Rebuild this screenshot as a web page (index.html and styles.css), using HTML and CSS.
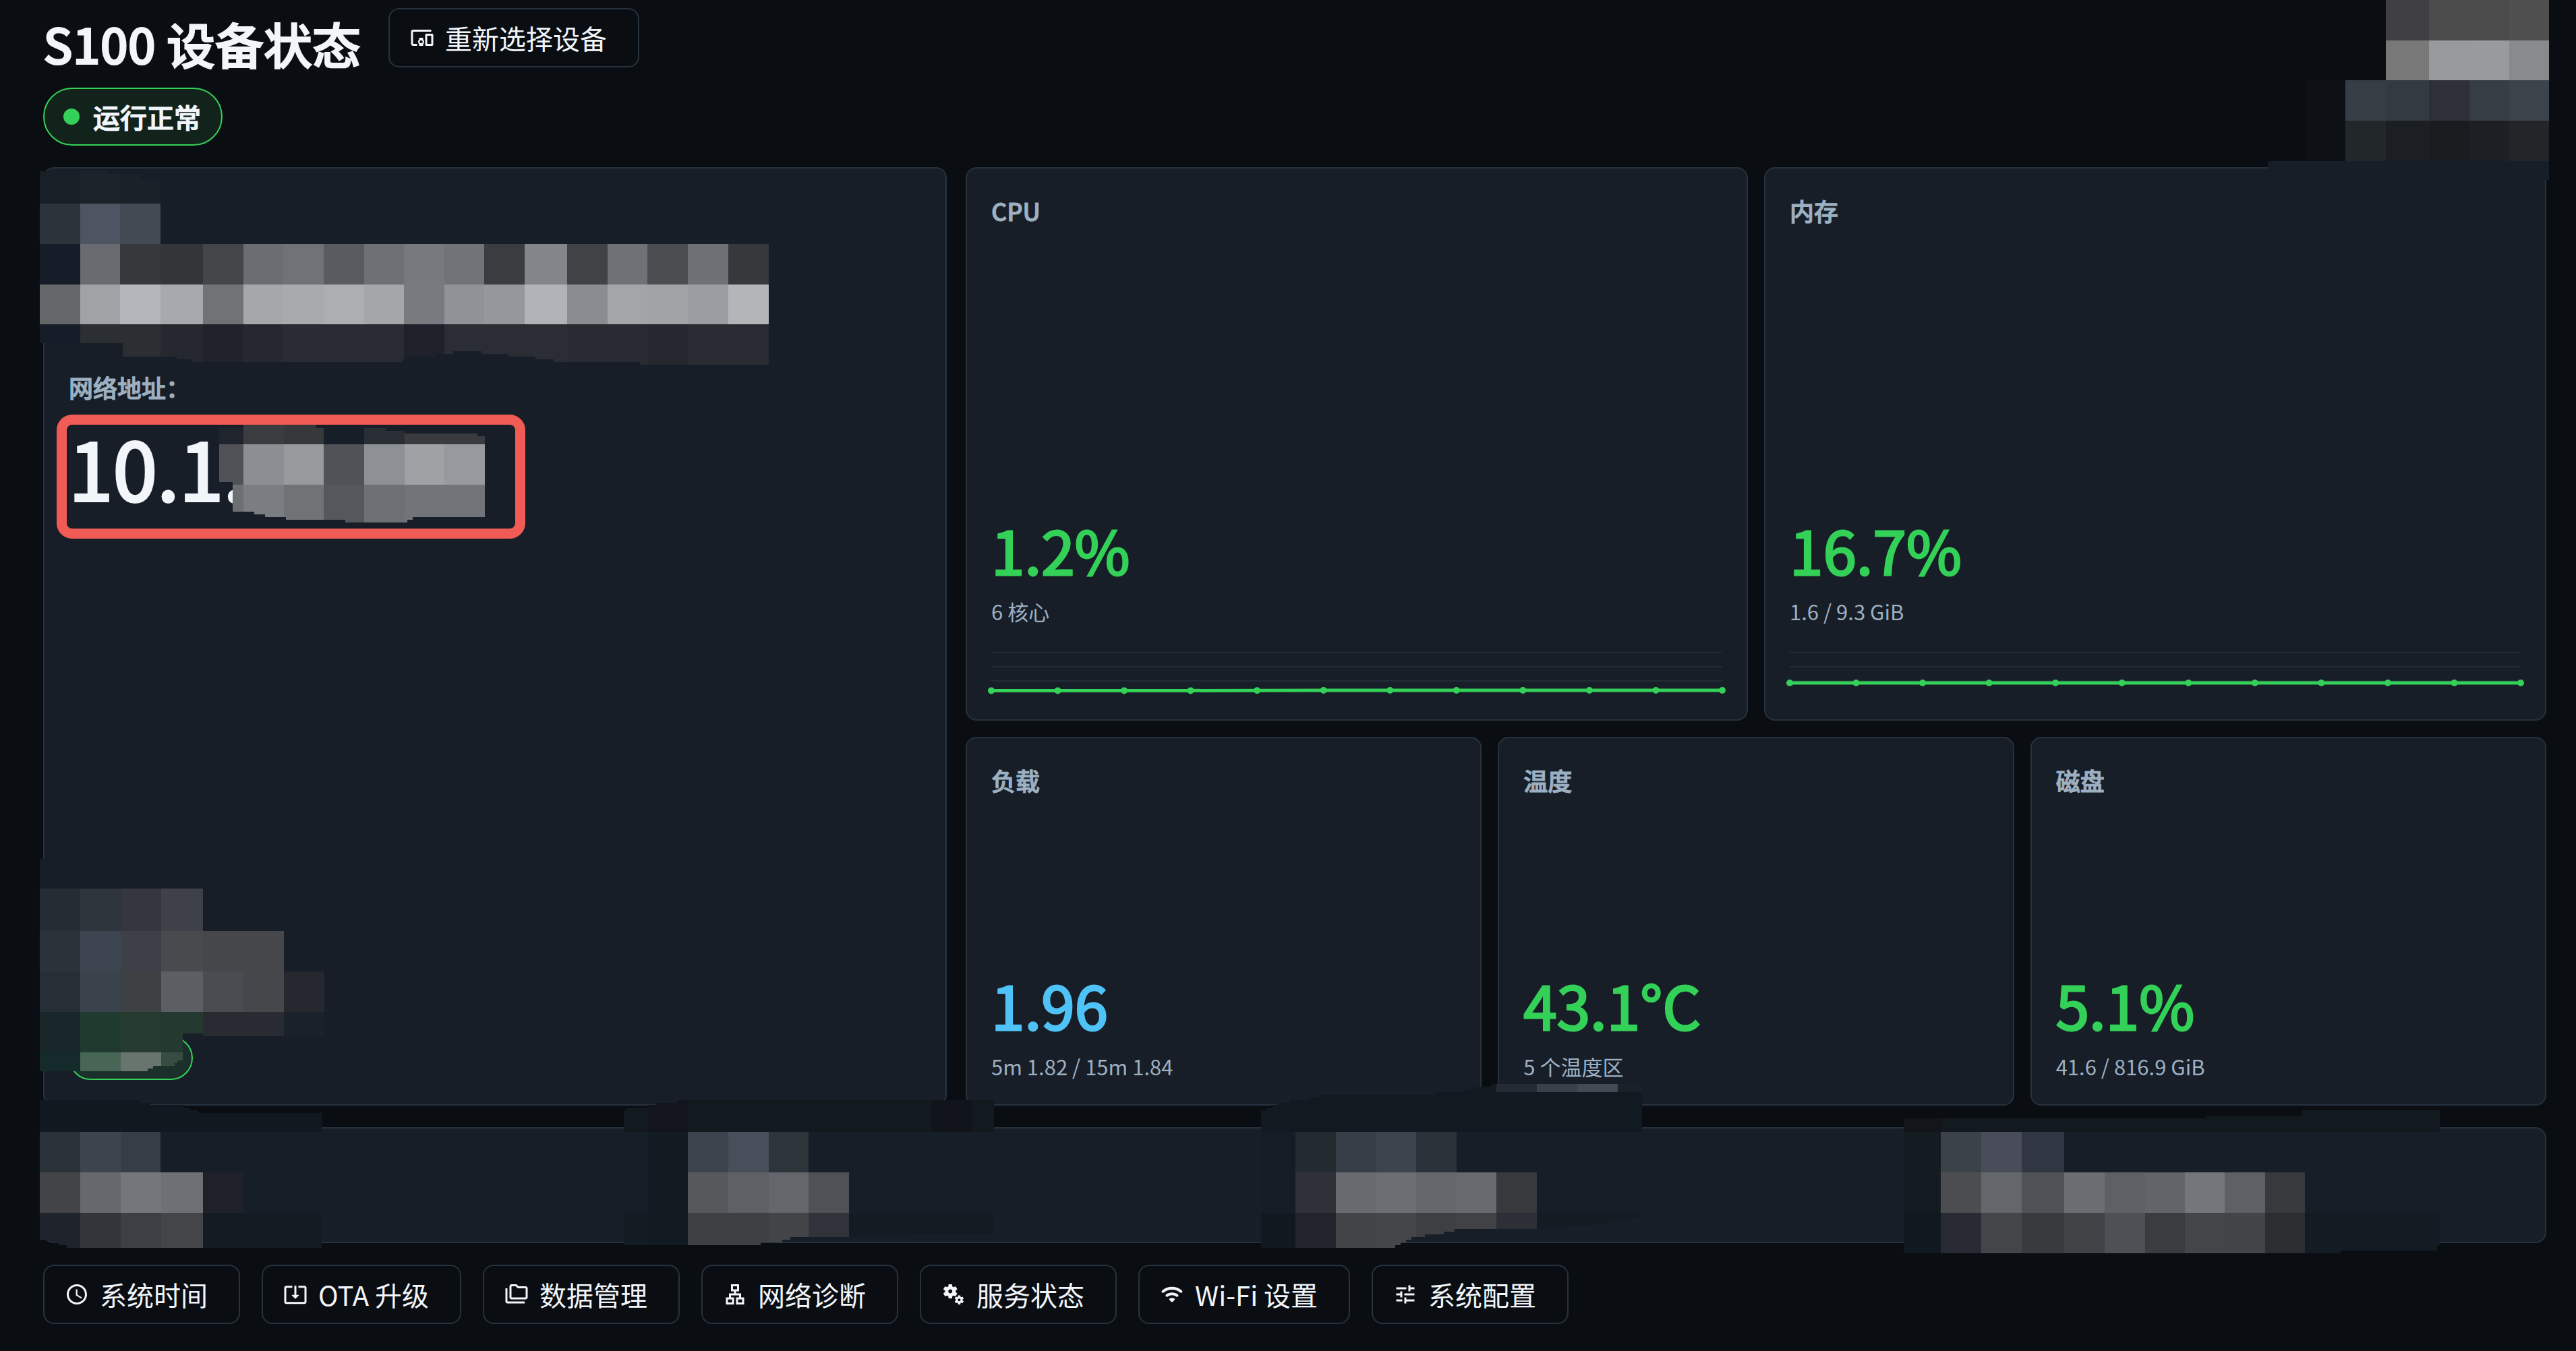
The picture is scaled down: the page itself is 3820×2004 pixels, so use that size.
FILE: index.html
```html
<!DOCTYPE html>
<html lang="zh-CN">
<head>
<meta charset="utf-8">
<title>S100 设备状态</title>
<link rel="stylesheet" href="styles.css">
</head>
<body>
<div class="page">
  <header class="header">
    <div class="title-row">
      <h1 class="title">S100 设备状态</h1>
      <button class="btn">
        <svg class="icon" viewBox="0 0 24 24"><path d="M3 6h18V4H3c-1.1 0-2 .9-2 2v12c0 1.1.9 2 2 2h4v-2H3V6zm10 6H9v1.78c-.61.55-1 1.33-1 2.22s.39 1.67 1 2.22V20h4v-1.78c.61-.55 1-1.34 1-2.22s-.39-1.67-1-2.22V12zm-2 5.5c-.83 0-1.5-.67-1.5-1.5s.67-1.5 1.5-1.5 1.5.67 1.5 1.5-.67 1.5-1.5 1.5zM22 8h-6c-.5 0-1 .5-1 1v10c0 .5.5 1 1 1h6c.5 0 1-.5 1-1V9c0-.5-.5-1-1-1zm-1 10h-4v-8h4v8z"/></svg>
        <span>重新选择设备</span>
      </button>
    </div>
    <div class="status"><i class="status-dot"></i><span>运行正常</span></div>
  </header>

  <main class="board">
    <section class="card identity">
      <div class="address">
        <div class="label">网络地址：</div>
        <div class="ip">10.1.</div>
      </div>
      <div class="tag"></div>
    </section>

    <div class="metrics">
      <section class="card metric wide">
        <div class="label">CPU</div>
        <div class="metric-body">
          <div class="value ok">1.2%</div>
          <div class="sub">6 核心</div>
          <svg class="chart" viewBox="0 0 1084 84">
            <path class="gridline" d="M0 21H1084M0 42H1084M0 63H1084"/>
            <path class="trend" d="M0 77.4H296L493 77H1084"/>
            <path class="dots" d="M0 77.4h0M98.5 77.4h0M197.1 77.4h0M295.6 77.4h0M394.2 77.2h0M492.7 77h0M591.3 77h0M689.8 77h0M788.4 77h0M886.9 77h0M985.5 77h0M1084 77h0"/>
          </svg>
        </div>
      </section>
      <section class="card metric wide">
        <div class="label">内存</div>
        <div class="metric-body">
          <div class="value ok">16.7%</div>
          <div class="sub">1.6 / 9.3 GiB</div>
          <svg class="chart" viewBox="0 0 1084 84">
            <path class="gridline" d="M0 21H1084M0 42H1084M0 63H1084"/>
            <path class="trend" d="M0 66H1084"/>
            <path class="dots" d="M0 66h0M98.5 66h0M197.1 66h0M295.6 66h0M394.2 66h0M492.7 66h0M591.3 66h0M689.8 66h0M788.4 66h0M886.9 66h0M985.5 66h0M1084 66h0"/>
          </svg>
        </div>
      </section>
      <section class="card metric">
        <div class="label">负载</div>
        <div class="metric-body">
          <div class="value info">1.96</div>
          <div class="sub">5m 1.82 / 15m 1.84</div>
        </div>
      </section>
      <section class="card metric">
        <div class="label">温度</div>
        <div class="metric-body">
          <div class="value ok">43.1°C</div>
          <div class="sub">5 个温度区</div>
        </div>
      </section>
      <section class="card metric">
        <div class="label">磁盘</div>
        <div class="metric-body">
          <div class="value ok">5.1%</div>
          <div class="sub">41.6 / 816.9 GiB</div>
        </div>
      </section>
    </div>
  </main>

  <section class="card strip"></section>

  <footer class="actions">
    <button class="btn"><svg class="icon" viewBox="0 0 24 24"><path d="M11.99 2C6.47 2 2 6.48 2 12s4.47 10 9.99 10C17.52 22 22 17.52 22 12S17.52 2 11.99 2zM12 20c-4.42 0-8-3.58-8-8s3.58-8 8-8 8 3.58 8 8-3.58 8-8 8zm.5-13H11v6l5.25 3.15.75-1.23-4.5-2.67z"/></svg><span>系统时间</span></button>
    <button class="btn"><svg class="icon" viewBox="0 0 24 24"><path d="M12 16.5l4-4h-3v-9h-2v9H8l4 4zm9-13h-6v1.99h6v14.03H3V5.49h6V3.5H3c-1.1 0-2 .9-2 2v14c0 1.1.9 2 2 2h18c1.1 0 2-.9 2-2v-14c0-1.1-.9-2-2-2z"/></svg><span>OTA 升级</span></button>
    <button class="btn"><svg class="icon" viewBox="0 0 24 24"><path d="M3 19h17v2H3c-1.1 0-2-.9-2-2V6h2v13zM23 6v9c0 1.1-.9 2-2 2H7c-1.1 0-2-.9-2-2l.01-11c0-1.1.89-2 1.99-2h5l2 2h7c1.1 0 2 .9 2 2zM7 15h14V6h-7.83l-2-2H7v11z"/></svg><span>数据管理</span></button>
    <button class="btn"><svg class="icon" viewBox="0 0 24 24"><path d="M13 22h8v-7h-3v-4h-5V9h3V2H8v7h3v2H6v4H3v7h8v-7H8v-2h8v2h-3v7zM10 7V4h4v3h-4zM9 17v3H5v-3h4zm10 0v3h-4v-3h4z"/></svg><span>网络诊断</span></button>
    <button class="btn"><svg class="icon" viewBox="0 0 24 24"><path d="M14.17 13.71l1.4-2.42c.09-.15.05-.34-.08-.45l-1.48-1.16c.03-.22.05-.45.05-.68s-.02-.46-.05-.69l1.48-1.16c.13-.11.17-.3.08-.45l-1.4-2.42c-.09-.15-.27-.21-.43-.15L12 4.83c-.36-.28-.75-.51-1.18-.69l-.26-1.85C10.53 2.13 10.38 2 10.21 2h-2.8c-.17 0-.32.13-.35.3L6.8 4.15c-.42.18-.82.41-1.18.69l-1.74-.7c-.16-.06-.34 0-.43.15l-1.4 2.42c-.09.15-.05.34.08.45l1.48 1.16c-.03.22-.05.45-.05.68s.02.46.05.69l-1.48 1.16c-.13.11-.17.3-.08.45l1.4 2.42c.09.15.27.21.43.15l1.74-.7c.36.28.75.51 1.18.69l.26 1.85c.03.16.18.29.35.29h2.8c.17 0 .32-.13.35-.3l.26-1.85c.42-.18.82-.41 1.18-.69l1.74.7c.16.06.34 0 .43-.15zM8.81 11c-1.1 0-2-.9-2-2s.9-2 2-2 2 .9 2 2-.9 2-2 2zM21.92 18.67l-.96-.74c.02-.14.04-.29.04-.44s-.01-.3-.04-.44l.95-.74c.08-.07.11-.19.05-.29l-.9-1.55c-.05-.1-.17-.13-.28-.1l-1.11.45c-.23-.18-.48-.33-.76-.44l-.17-1.18c-.01-.12-.11-.2-.21-.2h-1.79c-.11 0-.21.08-.22.19l-.17 1.18c-.27.12-.53.26-.76.44l-1.11-.45c-.1-.04-.22 0-.28.1l-.9 1.55c-.05.1-.04.22.05.29l.95.74c-.02.14-.03.29-.03.44s.01.3.03.44l-.95.74c-.08.07-.11.19-.05.29l.9 1.55c.05.1.17.13.28.1l1.11-.45c.23.18.48.33.76.44l.17 1.18c.02.11.11.19.22.19h1.79c.11 0 .21-.08.22-.19l.17-1.18c.27-.12.53-.26.75-.44l1.12.45c.1.04.22 0 .28-.1l.9-1.55c.06-.09.03-.21-.05-.28zm-4.29.16c-.74 0-1.35-.6-1.35-1.35s.6-1.35 1.35-1.35 1.35.6 1.35 1.35-.61 1.35-1.35 1.35z"/></svg><span>服务状态</span></button>
    <button class="btn"><svg class="icon" viewBox="0 0 24 24"><path d="M2.1 10.1c.5.5 1.3.5 1.8.1 4.7-3.9 11.5-3.9 16.2 0 .5.4 1.3.4 1.8-.1.6-.6.5-1.5-.1-2-5.7-4.7-13.9-4.7-19.6 0-.6.5-.7 1.4-.1 2zM9.6 17.6l1.7 1.7c.4.4 1 .4 1.4 0l1.7-1.7c.5-.5.4-1.3-.2-1.6-1.4-.7-3-.7-4.4 0-.6.3-.7 1.1-.2 1.6zM6.100 14.100c.5.5 1.200.5 1.700.1 2.500-1.800 5.900-1.800 8.400 0 .5.4 1.200.3 1.700-.1.6-.6.6-1.600-.1-2.100-3.400-2.500-8.200-2.500-11.600 0-.7.5-.7 1.500-.1 2.100z"/></svg><span>Wi-Fi 设置</span></button>
    <button class="btn"><svg class="icon" viewBox="0 0 24 24"><path d="M3 17v2h6v-2H3zM3 5v2h10V5H3zm10 16v-2h8v-2h-8v-2h-2v6h2zM7 9v2H3v2h4v2h2V9H7zm14 4v-2H11v2h10zm-6-4h2V7h4V5h-4V3h-2v6z"/></svg><span>系统配置</span></button>
  </footer>
</div>

<!-- Privacy mosaic over the sensitive regions -->
<svg class="mosaic" viewBox="0 0 3820 2004" shape-rendering="crispEdges">
  <defs>
    <clipPath id="clip-name"><path d="M59 254H159V258H208V266H238V302H1140V541H949V537H821V533H794V529H754V525H714V521H672V525H648V529H603V533H597V537H285V533H262V529H182V509H59Z"/></clipPath>
    <clipPath id="clip-ip"><path d="M325 635H361V630H469V635H572V639H600V643H708V647H719V767H612V771H604V775H512V771H424V767H393V763H377V759H345V715H325Z"/></clipPath>
    <clipPath id="clip-tag"><path d="M59 1274H481V1537H301V1533H271V1573H263V1577H259V1581H227V1585H219V1589H59Z"/></clipPath>
    <clipPath id="clip-s1"><path d="M59 1632H207V1636H223V1639H271V1643H282V1647H294V1651H477V1851H99V1847H87V1843H77V1839H59Z"/></clipPath>
    <clipPath id="clip-s2"><path d="M925 1647H929V1643H960V1639H972V1636H1004V1632H1474V1831H1351V1835H1172V1839H1160V1843H1128V1847H925Z"/></clipPath>
    <clipPath id="clip-s3"><path d="M1870 1647H1878V1643H1886V1639H1894V1636H1913V1632H1941V1628H1957V1624H2128V1620H2172V1616H2187V1612H2211V1608H2435V1807H2411V1811H2386V1815H2366V1819H2326V1823H2157V1827H2141V1831H2113V1835H2093V1839H2085V1843H2077V1847H2069V1851H1870Z"/></clipPath>
    <clipPath id="clip-s4"><path d="M2823 1659H3272V1655H3414V1647H3618V1847H3614V1855H3471V1859H2823Z"/></clipPath>
  </defs>

  <g>
    <rect x="3538" y="0" width="64" height="60" fill="#404044"/><rect x="3602" y="0" width="119" height="60" fill="#4b4b4b"/><rect x="3721" y="0" width="59" height="60" fill="#4f4f50"/>
    <rect x="3538" y="60" width="64" height="59" fill="#787878"/><rect x="3602" y="60" width="60" height="59" fill="#98999c"/><rect x="3662" y="60" width="59" height="59" fill="#989b9d"/><rect x="3721" y="60" width="59" height="59" fill="#888b8c"/>
    <rect x="3418" y="119" width="60" height="120" fill="#0d1115"/>
    <rect x="3478" y="119" width="60" height="60" fill="#363d45"/><rect x="3538" y="119" width="64" height="60" fill="#333a42"/><rect x="3602" y="119" width="60" height="60" fill="#2d3039"/><rect x="3662" y="119" width="59" height="60" fill="#363d44"/><rect x="3721" y="119" width="59" height="60" fill="#3c434b"/>
    <rect x="3478" y="179" width="60" height="60" fill="#22272a"/><rect x="3538" y="179" width="64" height="60" fill="#1b1e22"/><rect x="3602" y="179" width="60" height="60" fill="#191b1f"/><rect x="3662" y="179" width="59" height="60" fill="#1c1f23"/><rect x="3721" y="179" width="59" height="60" fill="#232529"/>
    <rect x="3363" y="239" width="417" height="28" fill="#161e27"/>
  </g>

  <g clip-path="url(#clip-name)">
    <rect x="59" y="254" width="60" height="48" fill="#181f26"/><rect x="119" y="254" width="59" height="48" fill="#1b222a"/><rect x="178" y="254" width="60" height="48" fill="#192129"/>
    <rect x="59" y="302" width="60" height="60" fill="#2b343b"/><rect x="119" y="302" width="59" height="60" fill="#4e5562"/><rect x="178" y="302" width="60" height="60" fill="#424a53"/>
    <rect x="59" y="362" width="60" height="60" fill="#151e28"/><rect x="119" y="362" width="59" height="60" fill="#686b6f"/><rect x="178" y="362" width="60" height="60" fill="#36383b"/><rect x="238" y="362" width="63" height="60" fill="#333538"/><rect x="301" y="362" width="60" height="60" fill="#434548"/><rect x="361" y="362" width="59" height="60" fill="#6a6d71"/><rect x="420" y="362" width="60" height="60" fill="#6f7276"/><rect x="480" y="362" width="60" height="60" fill="#585b5f"/><rect x="540" y="362" width="59" height="60" fill="#6d7074"/><rect x="599" y="362" width="60" height="60" fill="#76797e"/><rect x="659" y="362" width="59" height="60" fill="#707377"/><rect x="718" y="362" width="60" height="60" fill="#3a3c3f"/><rect x="778" y="362" width="63" height="60" fill="#828589"/><rect x="841" y="362" width="60" height="60" fill="#404346"/><rect x="901" y="362" width="59" height="60" fill="#6e7175"/><rect x="960" y="362" width="60" height="60" fill="#4b4d51"/><rect x="1020" y="362" width="60" height="60" fill="#6d7074"/><rect x="1080" y="362" width="60" height="60" fill="#36383c"/>
    <rect x="59" y="422" width="60" height="59" fill="#646769"/><rect x="119" y="422" width="59" height="59" fill="#9fa3a5"/><rect x="178" y="422" width="60" height="59" fill="#b3b7bb"/><rect x="238" y="422" width="63" height="59" fill="#a6a9ad"/><rect x="301" y="422" width="60" height="59" fill="#707376"/><rect x="361" y="422" width="59" height="59" fill="#a4a8ab"/><rect x="420" y="422" width="60" height="59" fill="#a7abad"/><rect x="480" y="422" width="60" height="59" fill="#abafb1"/><rect x="540" y="422" width="59" height="59" fill="#a3a7a9"/><rect x="599" y="422" width="60" height="59" fill="#787a7f"/><rect x="659" y="422" width="59" height="59" fill="#8f9297"/><rect x="718" y="422" width="60" height="59" fill="#94979b"/><rect x="778" y="422" width="63" height="59" fill="#b0b3b8"/><rect x="841" y="422" width="60" height="59" fill="#898c90"/><rect x="901" y="422" width="59" height="59" fill="#a3a6a9"/><rect x="960" y="422" width="60" height="59" fill="#a0a3a6"/><rect x="1020" y="422" width="60" height="59" fill="#9b9da2"/><rect x="1080" y="422" width="60" height="59" fill="#b2b6b9"/>
    <rect x="59" y="481" width="60" height="60" fill="#151e28"/><rect x="119" y="481" width="119" height="60" fill="#2b2e33"/><rect x="238" y="481" width="63" height="60" fill="#25282f"/><rect x="301" y="481" width="60" height="60" fill="#20232b"/><rect x="361" y="481" width="59" height="60" fill="#25282f"/><rect x="420" y="481" width="179" height="60" fill="#292c33"/><rect x="599" y="481" width="60" height="60" fill="#1e2129"/><rect x="659" y="481" width="182" height="60" fill="#2a2d33"/><rect x="841" y="481" width="119" height="60" fill="#282b31"/><rect x="960" y="481" width="60" height="60" fill="#25282e"/><rect x="1020" y="481" width="120" height="60" fill="#292c32"/>
  </g>

  <g clip-path="url(#clip-ip)">
    <rect x="325" y="630" width="36" height="29" fill="#20242c"/><rect x="361" y="630" width="60" height="29" fill="#3a3c3f"/><rect x="421" y="630" width="59" height="29" fill="#36383a"/><rect x="480" y="630" width="60" height="29" fill="#161e28"/><rect x="540" y="630" width="60" height="29" fill="#292d34"/><rect x="600" y="630" width="119" height="29" fill="#393b3f"/>
    <rect x="325" y="659" width="36" height="60" fill="#505257"/><rect x="361" y="659" width="60" height="60" fill="#8b8e92"/><rect x="421" y="659" width="59" height="60" fill="#969a9c"/><rect x="480" y="659" width="60" height="60" fill="#4f5256"/><rect x="540" y="659" width="60" height="60" fill="#8d9094"/><rect x="600" y="659" width="59" height="60" fill="#9fa2a4"/><rect x="659" y="659" width="60" height="60" fill="#96999d"/>
    <rect x="325" y="719" width="36" height="60" fill="#6d7072"/><rect x="361" y="719" width="60" height="60" fill="#7a7d81"/><rect x="421" y="719" width="59" height="60" fill="#707376"/><rect x="480" y="719" width="60" height="60" fill="#54575b"/><rect x="540" y="719" width="60" height="60" fill="#6d7074"/><rect x="600" y="719" width="119" height="60" fill="#717478"/>
  </g>

  <g clip-path="url(#clip-tag)">
    <rect x="59" y="1274" width="60" height="44" fill="#171e27"/>
    <rect x="59" y="1318" width="60" height="63" fill="#262c34"/><rect x="119" y="1318" width="60" height="63" fill="#2e353c"/><rect x="179" y="1318" width="60" height="63" fill="#35373f"/><rect x="239" y="1318" width="62" height="63" fill="#3f4149"/>
    <rect x="59" y="1381" width="60" height="60" fill="#2b333a"/><rect x="119" y="1381" width="60" height="60" fill="#3d4550"/><rect x="179" y="1381" width="60" height="60" fill="#3e4048"/><rect x="239" y="1381" width="62" height="60" fill="#484a4d"/><rect x="301" y="1381" width="120" height="60" fill="#45474b"/>
    <rect x="59" y="1441" width="60" height="60" fill="#272e36"/><rect x="119" y="1441" width="60" height="60" fill="#3a424c"/><rect x="179" y="1441" width="60" height="60" fill="#3d4043"/><rect x="239" y="1441" width="62" height="60" fill="#5b5e63"/><rect x="301" y="1441" width="60" height="60" fill="#494c50"/><rect x="361" y="1441" width="60" height="60" fill="#45474b"/><rect x="421" y="1441" width="60" height="60" fill="#25292f"/>
    <rect x="59" y="1501" width="60" height="60" fill="#1a272a"/><rect x="119" y="1501" width="60" height="60" fill="#203a2f"/><rect x="179" y="1501" width="60" height="60" fill="#253b31"/><rect x="239" y="1501" width="62" height="60" fill="#24392f"/><rect x="301" y="1501" width="120" height="36" fill="#282b32"/><rect x="421" y="1501" width="60" height="36" fill="#19212a"/>
    <rect x="59" y="1561" width="60" height="28" fill="#152a2a"/><rect x="119" y="1561" width="60" height="28" fill="#486655"/><rect x="179" y="1561" width="60" height="28" fill="#68756f"/><rect x="239" y="1561" width="32" height="28" fill="#384d42"/>
  </g>

  <g clip-path="url(#clip-s1)">
    <rect x="59" y="1632" width="418" height="47" fill="#111920"/><rect x="59" y="1679" width="418" height="120" fill="#161e27"/><rect x="59" y="1799" width="418" height="52" fill="#131b23"/>
    <rect x="59" y="1679" width="60" height="60" fill="#2b333a"/><rect x="119" y="1679" width="60" height="60" fill="#3d444e"/><rect x="179" y="1679" width="59" height="60" fill="#363d47"/>
    <rect x="59" y="1739" width="60" height="60" fill="#424447"/><rect x="119" y="1739" width="60" height="60" fill="#65686d"/><rect x="179" y="1739" width="60" height="60" fill="#73777b"/><rect x="239" y="1739" width="62" height="60" fill="#6d7075"/><rect x="301" y="1739" width="60" height="60" fill="#1e212a"/>
    <rect x="59" y="1799" width="60" height="52" fill="#1f232b"/><rect x="119" y="1799" width="60" height="52" fill="#323539"/><rect x="179" y="1799" width="60" height="52" fill="#3c3f43"/><rect x="239" y="1799" width="62" height="52" fill="#434549"/>
  </g>

  <g clip-path="url(#clip-s2)">
    <rect x="925" y="1632" width="549" height="47" fill="#121a20"/><rect x="925" y="1679" width="549" height="120" fill="#161e27"/><rect x="925" y="1799" width="549" height="52" fill="#141c23"/>
    <rect x="960" y="1632" width="60" height="47" fill="#12151b"/><rect x="1381" y="1632" width="61" height="47" fill="#11141b"/>
    <rect x="960" y="1679" width="60" height="172" fill="#131b22"/>
    <rect x="1020" y="1679" width="60" height="60" fill="#3c434c"/><rect x="1080" y="1679" width="60" height="60" fill="#484e5a"/><rect x="1140" y="1679" width="59" height="60" fill="#2d353b"/>
    <rect x="1020" y="1739" width="60" height="60" fill="#56585c"/><rect x="1080" y="1739" width="60" height="60" fill="#5d6065"/><rect x="1140" y="1739" width="59" height="60" fill="#63666b"/><rect x="1199" y="1739" width="60" height="60" fill="#4e5155"/>
    <rect x="1020" y="1799" width="120" height="52" fill="#3d3f43"/><rect x="1140" y="1799" width="59" height="52" fill="#424448"/><rect x="1199" y="1799" width="60" height="52" fill="#31333a"/>
  </g>

  <g clip-path="url(#clip-s3)">
    <rect x="1870" y="1608" width="565" height="71" fill="#111a20"/><rect x="1870" y="1679" width="565" height="120" fill="#161e27"/><rect x="1870" y="1799" width="565" height="52" fill="#141c23"/>
    <rect x="2219" y="1608" width="60" height="12" fill="#252b34"/><rect x="2279" y="1608" width="60" height="12" fill="#3a404a"/><rect x="2339" y="1608" width="60" height="12" fill="#444a54"/><rect x="2399" y="1608" width="36" height="12" fill="#192027"/>
    <rect x="1870" y="1679" width="51" height="120" fill="#141d25"/>
    <rect x="1921" y="1679" width="60" height="60" fill="#232a30"/><rect x="1981" y="1679" width="60" height="60" fill="#363d46"/><rect x="2041" y="1679" width="59" height="60" fill="#3d444d"/><rect x="2100" y="1679" width="60" height="60" fill="#2b323a"/>
    <rect x="1921" y="1739" width="60" height="60" fill="#2f3138"/><rect x="1981" y="1739" width="60" height="60" fill="#676a6e"/><rect x="2041" y="1739" width="59" height="60" fill="#6b6e72"/><rect x="2100" y="1739" width="60" height="60" fill="#63666b"/><rect x="2160" y="1739" width="59" height="60" fill="#67696e"/><rect x="2219" y="1739" width="60" height="60" fill="#37393c"/>
    <rect x="1870" y="1799" width="51" height="52" fill="#111920"/><rect x="1921" y="1799" width="60" height="52" fill="#21242b"/><rect x="1981" y="1799" width="60" height="52" fill="#424448"/><rect x="2041" y="1799" width="59" height="52" fill="#444649"/><rect x="2100" y="1799" width="60" height="52" fill="#3d3f43"/><rect x="2160" y="1799" width="59" height="52" fill="#404246"/><rect x="2219" y="1799" width="60" height="52" fill="#2d2f37"/>
  </g>

  <g clip-path="url(#clip-s4)">
    <rect x="2823" y="1647" width="795" height="32" fill="#121a20"/><rect x="2823" y="1679" width="795" height="120" fill="#161e27"/><rect x="2823" y="1799" width="795" height="60" fill="#131b23"/>
    <rect x="2823" y="1647" width="55" height="32" fill="#12151a"/><rect x="2823" y="1679" width="55" height="120" fill="#141c22"/><rect x="2823" y="1799" width="55" height="60" fill="#101820"/>
    <rect x="2878" y="1679" width="60" height="60" fill="#3b4248"/><rect x="2938" y="1679" width="60" height="60" fill="#484d59"/><rect x="2998" y="1679" width="63" height="60" fill="#303742"/>
    <rect x="2878" y="1739" width="60" height="60" fill="#4b4d51"/><rect x="2938" y="1739" width="60" height="60" fill="#63666a"/><rect x="2998" y="1739" width="63" height="60" fill="#4f5256"/><rect x="3061" y="1739" width="60" height="60" fill="#6a6d71"/><rect x="3121" y="1739" width="60" height="60" fill="#5d6064"/><rect x="3181" y="1739" width="59" height="60" fill="#616468"/><rect x="3240" y="1739" width="59" height="60" fill="#73767b"/><rect x="3299" y="1739" width="60" height="60" fill="#5d6064"/><rect x="3359" y="1739" width="59" height="60" fill="#37393d"/>
    <rect x="2878" y="1799" width="60" height="60" fill="#292b34"/><rect x="2938" y="1799" width="60" height="60" fill="#434548"/><rect x="2998" y="1799" width="63" height="60" fill="#383a3e"/><rect x="3061" y="1799" width="60" height="60" fill="#414347"/><rect x="3121" y="1799" width="60" height="60" fill="#4d5054"/><rect x="3181" y="1799" width="59" height="60" fill="#3a3c40"/><rect x="3240" y="1799" width="59" height="60" fill="#434549"/><rect x="3299" y="1799" width="60" height="60" fill="#424448"/><rect x="3359" y="1799" width="59" height="60" fill="#2b2d31"/>
  </g>
</svg>
<div class="highlight"></div>
</body>
</html>
```
FILE: styles.css
```css
* { box-sizing: border-box; }

body {
  margin: 0;
  position: relative;
  height: 2004px;
  overflow: hidden;
  background: #0a0e12;
  color: #f2f5fa;
  font-family: "Noto Sans CJK SC", sans-serif;
}

.page {
  height: 2004px;
  padding: 12px 44px 40px 64px;
  display: flex;
  flex-direction: column;
}

.header {
  height: 236px;
  flex: none;
}

.title-row {
  display: flex;
  align-items: flex-start;
  gap: 41px;
  height: 118px;
}

/* Lighter faces thickened by an outline, which keeps their advance widths */
.title, .status, .label {
  font-weight: 500;
  -webkit-text-stroke: 0.03em currentColor;
}

.value, .ip {
  font-weight: 400;
  -webkit-text-stroke: 0.034em currentColor;
}

.title {
  margin: 0;
  font-size: 72px;
  line-height: 104px;
  white-space: nowrap;
}

.btn {
  display: inline-flex;
  align-items: center;
  gap: 16px;
  height: 88px;
  padding: 0 46px 0 30px;
  border: 2px solid #26323e;
  border-radius: 16px;
  background: transparent;
  color: inherit;
  font: 400 40px/56px "Noto Sans CJK SC", sans-serif;
  white-space: nowrap;
}

.icon {
  width: 36px;
  height: 36px;
  fill: currentColor;
  flex: none;
}

.status {
  display: inline-flex;
  align-items: center;
  gap: 20px;
  height: 86px;
  padding: 0 30px 0 28px;
  border: 2px solid #34d158;
  border-radius: 43px;
  background: #11231b;
  font-size: 40px;
  line-height: 56px;
}

.status-dot {
  width: 24px;
  height: 24px;
  border-radius: 50%;
  background: #34d158;
}

.board {
  display: grid;
  grid-template-columns: 1340px 2344px;
  gap: 28px;
  height: 1392px;
  flex: none;
}

.card {
  border: 2px solid #26323e;
  border-radius: 16px;
  background: #171e27;
}

.label {
  color: #9db0c2;
  font-size: 36px;
  line-height: 52px;
}

.identity {
  padding: 298px 36px 36px;
  display: flex;
  flex-direction: column;
  justify-content: space-between;
}

.ip {
  margin-top: 20px;
  font-size: 118px;
  line-height: 144px;
}

.tag {
  width: 184px;
  height: 65px;
  border: 2px solid #34d158;
  border-radius: 33px;
  background: #1b302b;
}

.metrics {
  display: grid;
  grid-template-columns: repeat(6, 1fr);
  grid-template-rows: 3fr 2fr;
  gap: 24px;
}

.metric {
  grid-column: span 2;
  padding: 36px;
  display: flex;
  flex-direction: column;
  justify-content: space-between;
}

.metric.wide { grid-column: span 3; }

.value {
  font-size: 89px;
  line-height: 104px;
}

.value.ok { color: #34d158; }
.value.info { color: #4fc3f7; }

.sub {
  margin-top: 20px;
  color: #9db0c2;
  font-size: 31px;
  line-height: 40px;
}

.chart {
  display: block;
  width: 1084px;
  height: 84px;
  margin-top: 20px;
  overflow: visible;
  fill: none;
}

.gridline { stroke: #222c37; stroke-width: 2; }
.trend { stroke: #34d158; stroke-width: 5; }
.dots { stroke: #34d158; stroke-width: 10; stroke-linecap: round; }

.strip {
  height: 172px;
  margin-top: 32px;
  flex: none;
}

.actions {
  display: flex;
  gap: 32px;
  margin-top: 32px;
}

.mosaic {
  position: absolute;
  left: 0;
  top: 0;
  width: 3820px;
  height: 2004px;
}

.highlight {
  position: absolute;
  left: 84px;
  top: 615px;
  width: 695px;
  height: 184px;
  border: 15px solid #f05b55;
  border-radius: 23px;
}
```
